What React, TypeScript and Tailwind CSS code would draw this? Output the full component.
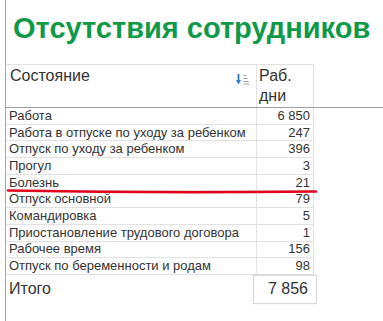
import React from 'react';

type Row = { name: string; days: string };

const rows: Row[] = [
    { name: 'Работа', days: '6 850' },
    { name: 'Работа в отпуске по уходу за ребенком', days: '247' },
    { name: 'Отпуск по уходу за ребенком', days: '396' },
    { name: 'Прогул', days: '3' },
    { name: 'Болезнь', days: '21' },
    { name: 'Отпуск основной', days: '79' },
    { name: 'Командировка', days: '5' },
    { name: 'Приостановление трудового договора', days: '1' },
    { name: 'Рабочее время', days: '156' },
    { name: 'Отпуск по беременности и родам', days: '98' },
];

const SortIcon: React.FC = () => (
    <svg width="14" height="11" viewBox="0 0 14 11" className="shrink-0">
        <path d="M2.5 0 V8" stroke="#2f78c4" strokeWidth="1.8" />
        <path d="M0 6 L2.5 10.5 L5 6 Z" fill="#2f78c4" />
        <path d="M7.5 1.5 H10.5 M7.5 4.5 H11.5 M7.5 7.5 H12.5 M7.5 10 H13" stroke="#9a9a9a" strokeWidth="1" />
    </svg>
);

const App: React.FC = () => {
    return (
        <div className="relative w-[383px] h-[321px] overflow-hidden bg-white font-['Liberation_Sans',Arial,sans-serif] text-[#333]">
            <div className="ml-[5px] h-full border-l border-[#a8a8a8]">
                <div className="h-[64px] pl-[7px] pt-[13px]">
                    <h1 className="text-[29px] leading-[30px] font-bold text-[#0f9a49] whitespace-nowrap">
                        Отсутствия сотрудников
                    </h1>
                </div>

                {/* header */}
                <div className="flex border-b border-[#a0a0a0]">
                    <div className="w-[250px] border-t border-[#e2e2e2] pl-[4px] pr-[6px] py-[1px] flex items-start justify-between">
                        <span className="text-[16px] leading-[20px]">Состояние</span>
                        <div className="mt-[8px]">
                            <SortIcon />
                        </div>
                    </div>
                    <div className="w-[58px] border-t border-x border-[#e2e2e2] pl-[2px] py-[1px] text-[16px] leading-[20px]">
                        <div>Раб.</div>
                        <div>дни</div>
                    </div>
                </div>

                {/* rows */}
                <div className="w-[308px]">
                    {rows.map((row) => (
                        <div key={row.name} className="flex h-[16.7px] border-b border-[#e2e2e2] text-[13px] leading-[16px]">
                            <div className="w-[250px] pl-[3px] flex items-center whitespace-nowrap">{row.name}</div>
                            <div className="w-[58px] border-x border-[#e2e2e2] pr-[3px] flex items-center justify-end">
                                {row.days}
                            </div>
                        </div>
                    ))}
                </div>

                {/* total */}
                <div className="flex h-[29px]">
                    <div className="w-[247px] pl-[3px] flex items-center text-[16px]">Итого</div>
                    <div className="w-[64px] border border-[#dadada] shadow-[0_0_2px_rgba(0,0,0,0.08)] pr-[8px] flex items-center justify-end text-[16px]">
                        7 856
                    </div>
                </div>
            </div>

            <svg className="absolute left-0 top-0 pointer-events-none" width="383" height="321">
                <path d="M8 190.5 Q 160 193.5 316 191.5" stroke="#e3001b" strokeWidth="2.4" fill="none" strokeLinecap="round" />
            </svg>
        </div>
    );
};

export default App;
